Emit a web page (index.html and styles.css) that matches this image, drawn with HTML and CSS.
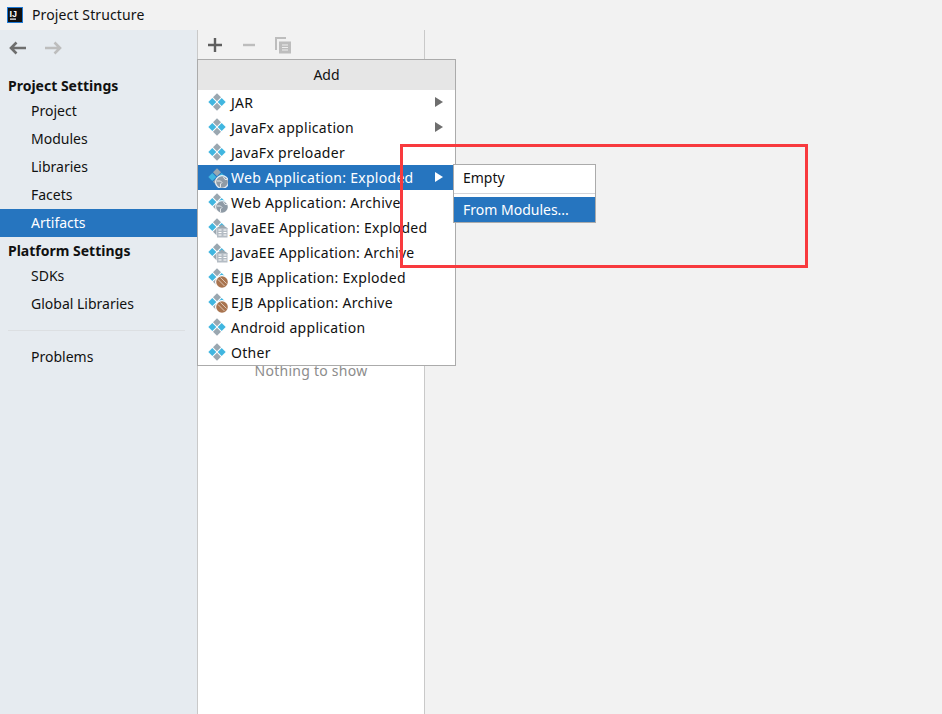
FILE: index.html
```html
<!DOCTYPE html>
<html lang="en">
<head>
<meta charset="utf-8">
<title>Project Structure</title>
<link rel="stylesheet" href="styles.css">
</head>
<body>
<svg class="sprite" width="0" height="0" aria-hidden="true">
  <defs>
    <g id="art">
      <path class="grey" d="M9 0.300 13 4.300 9 8.300 5 4.300Z"/>
      <path class="grey" d="M9 9.700 13 13.700 9 17.700 5 13.700Z"/>
      <path class="blue" d="M4.300 5 8.300 9 4.300 13 0.300 9Z"/>
      <path class="blue" d="M13.700 5 17.700 9 13.700 13 9.700 9Z"/>
    </g>
    <g id="globe">
      <circle cx="14" cy="14" r="7" fill="#fff" fill-opacity=".85"/>
      <circle cx="14" cy="14" r="5.800" fill="#8f9ba6"/>
      <path d="M9 13h3.500l1.500 1.500-1.500 1.500v3M15.500 9 17 11.500h2.500" fill="none" stroke="#e4e8eb" stroke-width="1"/>
    </g>
    <g id="ee">
      <rect x="8.500" y="8" width="11.500" height="12" fill="#fff"/>
      <path d="M8 10.500 14 6.500 20 10.500Z" fill="#9aa7b0"/>
      <rect x="9" y="10" width="10.500" height="9.500" fill="#b4bcc4"/>
      <path d="M10.500 12h3M10.500 14.500h3M10.500 17h3M15.500 12h3M15.500 14.500h3M15.500 17h3" stroke="#fff" stroke-width="1.100"/>
    </g>
    <g id="bean">
      <circle cx="14" cy="14" r="7" fill="#fff"/>
      <circle cx="14" cy="14" r="5.800" fill="#a9744f"/>
      <path d="M10 11.500 16.500 18M12.500 9.500 18.500 15.500" stroke="#dcc6b4" stroke-width="1"/>
    </g>
  </defs>
</svg>

<div class="window">
  <header class="titlebar">
    <svg class="app-logo" width="16" height="16" viewBox="0 0 16 16">
      <rect x="0.500" y="0.500" width="15" height="15" fill="#111" stroke="#1f7ad6"/>
      <text x="2.500" y="9.500" class="logo-text">IJ</text>
      <rect x="3" y="11.500" width="6" height="1.200" fill="#fff"/>
    </svg>
    <span class="title">Project Structure</span>
  </header>

  <div class="content">
    <nav class="sidebar">
      <div class="nav-arrows">
        <svg width="18" height="14" viewBox="0 0 18 14"><path d="M17 7H2M7.500 1.500 2 7l5.500 5.500" fill="none" stroke="#6e6e6e" stroke-width="2.600"/></svg>
        <svg width="18" height="14" viewBox="0 0 18 14"><path d="M1 7h15M10.500 1.500 16 7l-5.500 5.500" fill="none" stroke="#bdbdbd" stroke-width="2.600"/></svg>
      </div>
      <div class="nav-head first">Project Settings</div>
      <a class="nav-item">Project</a>
      <a class="nav-item">Modules</a>
      <a class="nav-item">Libraries</a>
      <a class="nav-item">Facets</a>
      <a class="nav-item active">Artifacts</a>
      <div class="nav-head">Platform Settings</div>
      <a class="nav-item">SDKs</a>
      <a class="nav-item">Global Libraries</a>
      <div class="nav-sep"></div>
      <a class="nav-item">Problems</a>
    </nav>

    <section class="list-panel">
      <div class="toolbar">
        <svg width="14" height="14" viewBox="0 0 14 14"><path d="M7 0v14M0 7h14" stroke="#5f5f5f" stroke-width="2.400"/></svg>
        <svg width="14" height="14" viewBox="0 0 14 14"><path d="M1 7h12" stroke="#bdbdbd" stroke-width="2.400"/></svg>
        <svg class="copy-icon" width="16" height="17" viewBox="0 0 16 17"><path d="M1 13V1h10" fill="none" stroke="#bdbdbd" stroke-width="2"/><path d="M4 4.500h12v12H4z" fill="#bdbdbd"/><path d="M7 8h6M7 10.500h6M7 13h6" stroke="#eee" stroke-width="1"/></svg>
      </div>
      <div class="list-body">Nothing to show</div>
    </section>

    <main class="detail"></main>
  </div>
</div>

<div class="menu">
  <div class="menu-title">Add</div>
  <div class="menu-item"><svg class="ico" viewBox="0 0 20 20"><use href="#art"/></svg>JAR<i class="chev"></i></div>
  <div class="menu-item"><svg class="ico" viewBox="0 0 20 20"><use href="#art"/></svg>JavaFx application<i class="chev"></i></div>
  <div class="menu-item"><svg class="ico" viewBox="0 0 20 20"><use href="#art"/></svg>JavaFx preloader</div>
  <div class="menu-item selected"><svg class="ico" viewBox="0 0 20 20"><use href="#art"/><use href="#globe"/></svg>Web Application: Exploded<i class="chev"></i></div>
  <div class="menu-item"><svg class="ico" viewBox="0 0 20 20"><use href="#art"/><use href="#globe"/></svg>Web Application: Archive</div>
  <div class="menu-item"><svg class="ico" viewBox="0 0 20 20"><use href="#art"/><use href="#ee"/></svg>JavaEE Application: Exploded</div>
  <div class="menu-item"><svg class="ico" viewBox="0 0 20 20"><use href="#art"/><use href="#ee"/></svg>JavaEE Application: Archive</div>
  <div class="menu-item"><svg class="ico" viewBox="0 0 20 20"><use href="#art"/><use href="#bean"/></svg>EJB Application: Exploded</div>
  <div class="menu-item"><svg class="ico" viewBox="0 0 20 20"><use href="#art"/><use href="#bean"/></svg>EJB Application: Archive</div>
  <div class="menu-item"><svg class="ico" viewBox="0 0 20 20"><use href="#art"/></svg>Android application</div>
  <div class="menu-item"><svg class="ico" viewBox="0 0 20 20"><use href="#art"/></svg>Other</div>
</div>

<div class="submenu">
  <div class="sub-item">Empty</div>
  <div class="sub-sep"></div>
  <div class="sub-item selected">From Modules...</div>
</div>

<div class="annotation"></div>
</body>
</html>
```
FILE: styles.css
```css
* { box-sizing: border-box; }
html, body { margin: 0; height: 714px; overflow: hidden; }
body {
  font-family: "Noto Sans", "Open Sans", sans-serif;
  font-size: 14px;
  color: #111;
  background: #f2f2f2;
  position: relative;
}
.sprite { position: absolute; }
.grey { fill: #9aa7b0; }
.blue { fill: #40b6e0; }

.window { display: flex; flex-direction: column; height: 714px; }
.titlebar {
  height: 30px;
  background: #f2f2f2;
  display: flex;
  align-items: center;
  padding-left: 7px;
  gap: 9px;
  flex: none;
}
.app-logo { display: block; }
.logo-text { font: bold 9px "Liberation Sans", sans-serif; fill: #fff; }
.title { font-size: 14px; letter-spacing: .12px; line-height: 30px; height: 30px; }

.content { flex: 1; display: flex; min-height: 0; }

.sidebar { width: 197px; background: #e6ebf0; flex: none; }
.nav-arrows {
  height: 45px;
  display: flex;
  align-items: center;
  gap: 17px;
  padding: 0 0 9px 9px;
}
.nav-head {
  font-weight: 700;
  padding-left: 8px;
  height: 25px;
  line-height: 27px;
}
.nav-head.first { height: 22px; line-height: 22px; }
.nav-item {
  display: block;
  height: 28px;
  line-height: 28px;
  padding-left: 31px;
}
.nav-item.active { background: #2675bf; color: #fff; }
.nav-sep {
  height: 1px;
  margin: 12px 12px 12px 8px;
  background: #dcdfe2;
}

.list-panel {
  width: 228px;
  flex: none;
  border-left: 1px solid #c9c9c9;
  border-right: 1px solid #c9c9c9;
  display: flex;
  flex-direction: column;
}
.toolbar {
  height: 30px;
  display: flex;
  align-items: center;
  gap: 20px;
  padding-left: 10px;
  background: #f2f2f2;
}
.copy-icon { margin-left: -1px; }
.list-body {
  flex: 1;
  background: #fff;
  text-align: center;
  color: #8c8c8c;
  padding-top: 301px;
  line-height: 20px;
  letter-spacing: .25px;
}
.detail { flex: 1; background: #f2f2f2; }

.menu {
  position: absolute;
  left: 197px;
  top: 59px;
  width: 259px;
  background: #fff;
  border: 1px solid #ababab;
}
.menu-title {
  height: 30px;
  line-height: 30px;
  background: #e6e6e6;
  text-align: center;
}
.menu-item {
  height: 25px;
  line-height: 25px;
  position: relative;
  padding-left: 33px;
  white-space: nowrap;
  letter-spacing: .3px;
}
.ico { position: absolute; left: 10px; top: 3px; width: 20px; height: 20px; }
.chev {
  position: absolute;
  right: 12px;
  top: 7px;
  width: 0;
  height: 0;
  border-left: 8px solid #6e6e6e;
  border-top: 5px solid transparent;
  border-bottom: 5px solid transparent;
}
.menu-item.selected { background: #2675bf; color: #fff; }
.menu-item.selected .chev { border-left-color: #fff; }

.submenu {
  position: absolute;
  left: 453px;
  top: 164px;
  width: 143px;
  background: #fff;
  border: 1px solid #ababab;
}
.sub-item { height: 25px; line-height: 25px; padding-left: 9px; }
.sub-item:first-child { height: 28px; line-height: 26px; }
.sub-sep { height: 1px; background: #d5d5d9; margin-bottom: 3px; }
.sub-item.selected { background: #2675bf; color: #fff; }

.annotation {
  position: absolute;
  left: 400px;
  top: 144px;
  width: 408px;
  height: 124px;
  border: 3px solid #f83a3e;
}
```
